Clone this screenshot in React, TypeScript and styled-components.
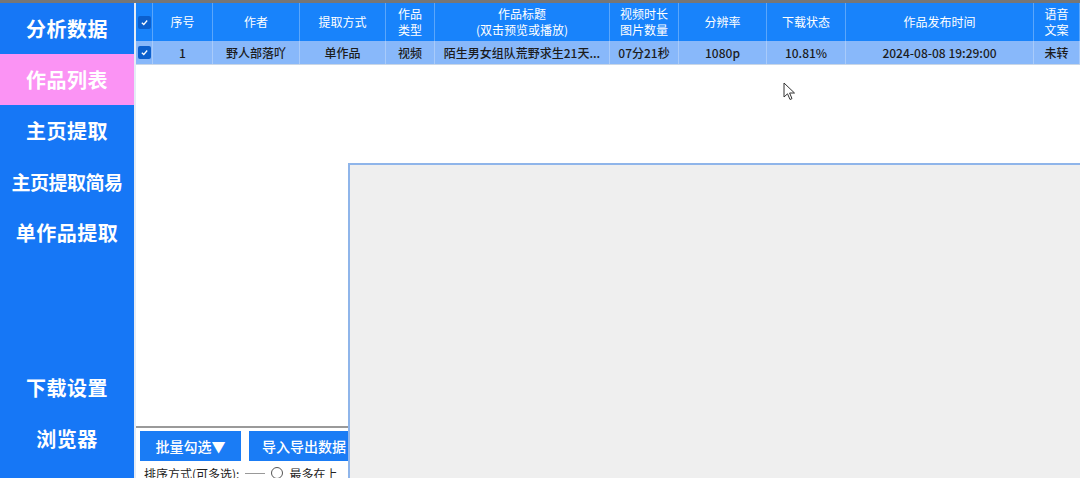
import styled, { createGlobalStyle } from "styled-components";

const GlobalStyle = createGlobalStyle`
    html, body {
        margin: 0;
        padding: 0;
        background: #ffffff;
    }
    body {
        font-family: "Noto Sans CJK SC", "Noto Sans", sans-serif;
    }
`

const Window = styled.div`
    position: relative;
    width: 1080px;
    height: 478px;
    overflow: hidden;
    display: flex;
    border-top: 3px solid #767676;
    box-sizing: border-box;
`

const Sidebar = styled.nav`
    width: 134px;
    flex-shrink: 0;
    background: #1677f6;
    display: flex;
    flex-direction: column;
    padding-bottom: 14px;
    border-right: 2px solid #e4ecf6;
`

const NavItem = styled.div<{ $active?: boolean; $size?: number }>`
    height: 51px;
    display: flex;
    align-items: center;
    justify-content: center;
    background: ${props => props.$active ? "#fb93f4" : "transparent"};
    color: #ffffff;
    font-size: ${props => props.$size ?? 20}px;
    font-weight: 700;
    letter-spacing: ${props => props.$size && props.$size < 20 ? "-0.5px" : "0.5px"};
    white-space: nowrap;
`

const Spacer = styled.div`
    flex: 1;
`

const Main = styled.main`
    flex: 1;
    display: flex;
    flex-direction: column;
    min-width: 0;
    overflow: hidden;
`

const Table = styled.div`
    flex: 1;
    background: #ffffff;
    border-bottom: 2px solid #9a9a9a;
`

const cols = "17px 60px 87px 86px 49px 175px 69px 88px 79px 188px 1fr"

const HeaderRow = styled.div`
    display: grid;
    grid-template-columns: ${cols};
    height: 38px;
    background: #1883fb;
    color: #ffffff;
`

const DataRow = styled.div`
    display: grid;
    grid-template-columns: ${cols};
    height: 23px;
    background: #88b8fa;
    color: #1c1c1c;
    border-bottom: 1px solid #c9d6e6;
`

const Cell = styled.div<{ $head?: boolean }>`
    display: flex;
    flex-direction: column;
    align-items: center;
    justify-content: center;
    text-align: center;
    font-size: 12px;
    line-height: 16px;
    font-weight: ${props => props.$head ? 400 : 500};
    border-right: 1px solid ${props => props.$head ? "#5aa6fb" : "#a9cbfa"};
    white-space: nowrap;
    overflow: hidden;
`

const Check = styled.span`
    width: 13px;
    height: 13px;
    border-radius: 2px;
    background: #0b5fcd;
    display: flex;
    align-items: center;
    justify-content: center;
`

const Toolbar = styled.div`
    display: flex;
    flex-shrink: 0;
    gap: 8px;
    padding: 3px 0 0 4px;
    height: 30px;
`

const BlueButton = styled.button<{ $width: number }>`
    width: ${props => props.$width}px;
    height: 30px;
    border: none;
    background: #1a7cf5;
    color: #ffffff;
    font-family: inherit;
    font-size: 14px;
    font-weight: 500;
    padding: 0;
    white-space: nowrap;
`

const SortRow = styled.div`
    display: flex;
    flex-shrink: 0;
    align-items: center;
    gap: 6px;
    height: 16px;
    padding: 4px 0 0 8px;
    margin-bottom: -3px;
    font-size: 12px;
    color: #222;
    white-space: nowrap;
`

const SortLine = styled.span`
    width: 20px;
    height: 1px;
    background: #999;
`

const Radio = styled.span`
    width: 10px;
    height: 10px;
    border: 1px solid #555;
    border-radius: 50%;
`

const Overlay = styled.div`
    position: absolute;
    left: 348px;
    top: 160px;
    right: -2px;
    bottom: -2px;
    background: #efefef;
    border: 2px solid #8fb5ea;
`

const Cursor = styled.svg`
    position: absolute;
    left: 783px;
    top: 79px;
`

function CheckIcon() {
    return (
        <Check>
            <svg width="9" height="9" viewBox="0 0 10 10">
                <path d="M2 5.2 L4.2 7.2 L8 2.8" stroke="#ffffff" strokeWidth="1.4" fill="none" />
            </svg>
        </Check>
    )
}

const headers: string[][] = [
    ["序号"], ["作者"], ["提取方式"], ["作品", "类型"], ["作品标题", "(双击预览或播放)"],
    ["视频时长", "图片数量"], ["分辨率"], ["下载状态"], ["作品发布时间"], ["语音", "文案"],
]

const row = ["1", "野人部落吖", "单作品", "视频", "陌生男女组队荒野求生21天...", "07分21秒", "1080p", "10.81%", "2024-08-08 19:29:00", "未转"]

export default function App() {
    return (
        <>
            <GlobalStyle />
            <Window>
                <Sidebar>
                    <NavItem>分析数据</NavItem>
                    <NavItem $active>作品列表</NavItem>
                    <NavItem>主页提取</NavItem>
                    <NavItem $size={19}>主页提取简易</NavItem>
                    <NavItem>单作品提取</NavItem>
                    <Spacer />
                    <NavItem>下载设置</NavItem>
                    <NavItem>浏览器</NavItem>
                </Sidebar>
                <Main>
                    <Table>
                        <HeaderRow>
                            <Cell $head><CheckIcon /></Cell>
                            {headers.map((lines, i) => (
                                <Cell $head key={i}>
                                    {lines.map(l => <span key={l}>{l}</span>)}
                                </Cell>
                            ))}
                        </HeaderRow>
                        <DataRow>
                            <Cell><CheckIcon /></Cell>
                            {row.map((text, i) => <Cell key={i}>{text}</Cell>)}
                        </DataRow>
                    </Table>
                    <Toolbar>
                        <BlueButton $width={101}>批量勾选▼</BlueButton>
                        <BlueButton $width={110}>导入导出数据</BlueButton>
                    </Toolbar>
                    <SortRow>
                        <span>排序方式(可多选):</span>
                        <SortLine />
                        <Radio />
                        <span>最多在上</span>
                    </SortRow>
                </Main>
                <Overlay />
                <Cursor width="13" height="20" viewBox="0 0 13 20">
                    <path d="M1 1 L1 15 L4.5 11.8 L7 17.5 L9 16.6 L6.6 11 L11.5 11 Z" fill="#ffffff" stroke="#333" strokeWidth="1" />
                </Cursor>
            </Window>
        </>
    );
}
